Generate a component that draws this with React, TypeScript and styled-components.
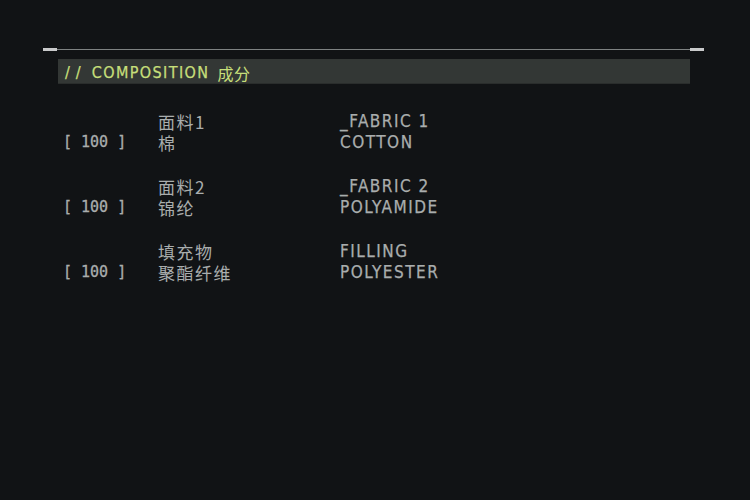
import styled, { createGlobalStyle } from "styled-components";

const GlobalStyle = createGlobalStyle`
  html, body {
    margin: 0;
    padding: 0;
    background: #111315;
  }
  body {
    width: 750px;
    height: 500px;
    overflow: hidden;
  }
`;

const Page = styled.div`
  width: 750px;
  height: 500px;
  box-sizing: border-box;
  padding: 47px 0 0 43px;
  background: #111315;
  font-family: "DejaVu Sans Condensed", "DejaVu Sans", "Noto Sans CJK SC", sans-serif;
`;

const Frame = styled.div`
  width: 661px;
`;

const Rule = styled.div`
  display: flex;
  align-items: center;
  height: 4px;
`;

const RuleCap = styled.div`
  width: 14px;
  height: 3px;
  background: #c9cacb;
`;

const RuleLine = styled.div`
  flex: 1;
  height: 1px;
  background: #7e8282;
`;

const Section = styled.section`
  margin: 8px 0 0 15px;
  width: 632px;
`;

const HeaderBar = styled.div`
  display: flex;
  align-items: center;
  height: 25px;
  box-sizing: border-box;
  padding: 4px 0 0 7px;
  background: #333735;
  border-bottom: 1px solid #2a2d2c;
  color: #c6df7a;
  line-height: 20px;
  -webkit-text-stroke: 0.25px #c6df7a;
`;

const Slashes = styled.span`
  font-size: 16px;
  letter-spacing: 6px;
  margin-right: 5px;
`;

const HeaderTitle = styled.span`
  font-size: 16px;
  letter-spacing: 1.4px;
  margin-right: 8px;
`;

const HeaderCn = styled.span`
  font-family: "Noto Sans CJK SC", sans-serif;
  font-size: 16px;
  letter-spacing: 0.5px;
  -webkit-text-stroke: 0;
`;

const Rows = styled.div`
  display: flex;
  flex-direction: column;
  gap: 23px;
  margin-top: 27px;
  padding-left: 5px;
`;

const Group = styled.div`
  display: grid;
  grid-template-columns: 95px 182px auto;
  grid-auto-rows: 21px;
  align-items: center;
  line-height: 21px;
  color: #a9adad;
`;

const Bracket = styled.span<{ $row: number }>`
  grid-column: 1;
  grid-row: ${({ $row }) => $row};
  font-family: "DejaVu Sans Mono", monospace;
  font-size: 15px;
  white-space: pre;
  -webkit-text-stroke: 0.3px #a9adad;
`;

const Cn = styled.span<{ $row: number }>`
  grid-column: 2;
  grid-row: ${({ $row }) => $row};
  font-family: "Noto Sans CJK SC", sans-serif;
  font-size: 17px;
  letter-spacing: 1.5px;
`;

const En = styled.span<{ $row: number }>`
  grid-column: 3;
  grid-row: ${({ $row }) => $row};
  font-size: 17px;
  letter-spacing: 1.5px;
  -webkit-text-stroke: 0.25px #a9adad;
`;

const items = [
  { cnLabel: "面料1", enLabel: "_FABRIC 1", cn: "棉", en: "COTTON" },
  { cnLabel: "面料2", enLabel: "_FABRIC 2", cn: "锦纶", en: "POLYAMIDE" },
  { cnLabel: "填充物", enLabel: "FILLING", cn: "聚酯纤维", en: "POLYESTER" },
];

export default function App() {
  return (
    <>
      <GlobalStyle />
      <Page>
        <Frame>
          <Rule>
            <RuleCap />
            <RuleLine />
            <RuleCap />
          </Rule>
          <Section>
            <HeaderBar>
              <Slashes>//</Slashes>
              <HeaderTitle>COMPOSITION</HeaderTitle>
              <HeaderCn>成分</HeaderCn>
            </HeaderBar>
            <Rows>
              {items.map((item) => (
                <Group key={item.enLabel}>
                  <Cn $row={1}>{item.cnLabel}</Cn>
                  <En $row={1}>{item.enLabel}</En>
                  <Bracket $row={2}>{"[ 100 ]"}</Bracket>
                  <Cn $row={2}>{item.cn}</Cn>
                  <En $row={2}>{item.en}</En>
                </Group>
              ))}
            </Rows>
          </Section>
        </Frame>
      </Page>
    </>
  );
}
